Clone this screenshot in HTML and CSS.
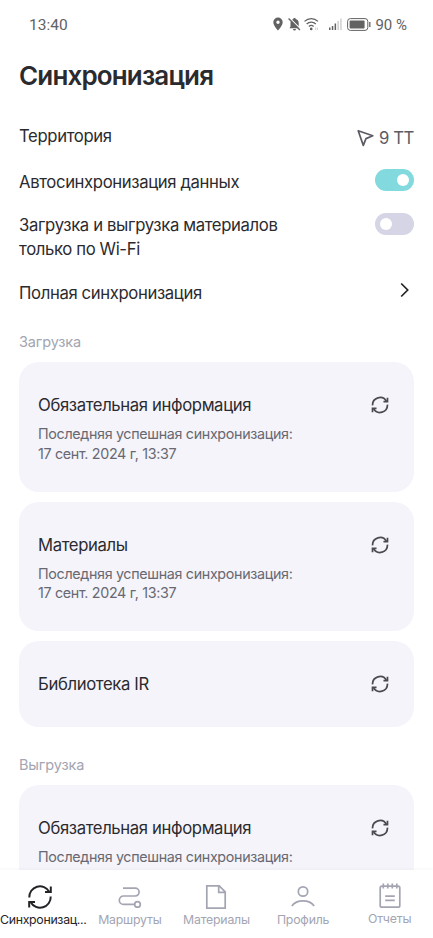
FILE: index.html
```html
<!DOCTYPE html>
<html lang="ru">
<head>
<meta charset="utf-8">
<meta name="viewport" content="width=device-width, initial-scale=1">
<title>Синхронизация</title>
<link rel="stylesheet" href="styles.css">
</head>
<body>
<svg class="defs" width="0" height="0" aria-hidden="true">
  <symbol id="sync" viewBox="0 0 26 26">
    <path d="M2.300 13.500A10.700 10.700 0 0 1 22.300 7.700M23.700 12.500A10.700 10.700 0 0 1 3.700 18.300"/>
    <path d="M23.800 2.500v5.500h-5.800M2.200 23.500v-5.500h5.800"/>
  </symbol>
</svg>
<div class="app">
  <header class="status">
    <span class="time">13:40</span>
    <div class="indicators">
      <svg class="pin" width="10" height="14" viewBox="0 0 10 14"><path fill="#626262" fill-rule="evenodd" d="M5 .5A4.7 4.7 0 0 0 .3 5.200C.3 8.600 5 13.500 5 13.500s4.700-4.900 4.700-8.300A4.700 4.700 0 0 0 5 .5zm0 3a1.700 1.700 0 1 1 0 3.400a1.700 1.700 0 0 1 0-3.400z"/></svg>
      <svg class="bell" width="13" height="14" viewBox="0 0 13 14"><path fill="#626262" d="M1.500 11.200 2.500 9.500V6C2.500 3.800 3.800 2.300 5.500 1.900V1h2v.9C9.400 2.300 10.700 3.800 10.700 6v3.500l1.200 1.700zM5 11.900h3a1.500 1.500 0 0 1-3 0z"/><path d="M1.500.8 12.800 12.100" stroke="#fff" stroke-width="1.200"/><path d="M.6 1.500 11.900 13" stroke="#626262" stroke-width="1.300"/></svg>
      <svg class="wifi" width="15" height="14" viewBox="0 0 15 14" fill="none" stroke="#626262" stroke-width="1.300"><path d="M.5 4.400a9.800 9.800 0 0 1 13.500 0M2.700 7a6.500 6.500 0 0 1 9.100 0M4.900 9.500a3.500 3.500 0 0 1 4.700 0"/><circle cx="7.200" cy="11.900" r=".7" fill="#626262"/><path d="M11.700 10.500v2.500M13.400 10.500v2.500" stroke="#c4c4c4" stroke-width=".8"/></svg>
      <svg class="signal" width="13" height="14" viewBox="0 0 13 14"><path fill="#626262" d="M0 10.500h1.500V13H0zM2.800 9h1.500v4H2.800zM5.600 6.500h1.500V13H5.600z"/><path fill="#d0d0d0" d="M8.400 4h1.500v9H8.400zM11.200 1.500h1.500V13h-1.500z"/></svg>
      <svg class="battery" width="24" height="13" viewBox="0 0 24 13"><rect x=".6" y=".6" width="20.200" height="11.800" rx="2.800" fill="none" stroke="#626262" stroke-width="1"/><rect x="2.600" y="2.600" width="15" height="7.800" rx="1" fill="#626262"/><path d="M22.800 4v5" stroke="#626262" stroke-width="1.300"/></svg>
      <span class="percent">90 %</span>
    </div>
  </header>
  <main class="content">
    <h1>Синхронизация</h1>
    <div class="row territory">
      <span>Территория</span>
      <span class="value"><svg width="17" height="18" viewBox="0 0 17 18" fill="none" stroke="#5b5b64" stroke-width="1.700" stroke-linejoin="round"><path d="M1.200 1.700 15.800 6.800 9 9.600 6.300 16.400z"/></svg>9 ТТ</span>
    </div>
    <div class="row auto"><span>Автосинхронизация данных</span><span class="toggle on"></span></div>
    <div class="row wifi-only"><span>Загрузка и выгрузка материалов<br>только по Wi-Fi</span><span class="toggle"></span></div>
    <div class="row full"><span>Полная синхронизация</span><svg class="chevron" width="10" height="16" viewBox="0 0 10 16" fill="none" stroke="#222" stroke-width="1.700"><path d="m1.200 1.500 6.500 6.500-6.500 6.500"/></svg></div>

    <h2>Загрузка</h2>
    <div class="cards">
      <section class="card">
        <div class="card-head"><h3>Обязательная информация</h3><svg class="sync"><use href="#sync"/></svg></div>
        <p>Последняя успешная синхронизация:<br>17 сент. 2024 г, 13:37</p>
      </section>
      <section class="card">
        <div class="card-head"><h3>Материалы</h3><svg class="sync"><use href="#sync"/></svg></div>
        <p>Последняя успешная синхронизация:<br>17 сент. 2024 г, 13:37</p>
      </section>
      <section class="card short">
        <div class="card-head"><h3>Библиотека IR</h3><svg class="sync"><use href="#sync"/></svg></div>
      </section>
    </div>
    <h2 class="upload">Выгрузка</h2>
    <div class="cards">
      <section class="card">
        <div class="card-head"><h3>Обязательная информация</h3><svg class="sync"><use href="#sync"/></svg></div>
        <p>Последняя успешная синхронизация:</p>
      </section>
    </div>
  </main>
  <nav class="tabs">
    <a class="tab active"><svg class="tab-sync" viewBox="0 0 26 26"><use href="#sync"/></svg><span>Синхронизац...</span></a>
    <a class="tab"><svg viewBox="0 0 26 26"><path d="M6 4.200h12.200a3.900 3.900 0 0 1 0 7.800H6.500a4.200 4.200 0 0 0 0 8.400h11"/><circle cx="20.500" cy="20.400" r="2.800"/></svg><span>Маршруты</span></a>
    <a class="tab"><svg viewBox="0 0 26 26"><path d="M3.800 1.800h12.400l6 6v16.400H3.800zM15.700 1.800v6.500h6.500"/></svg><span>Материалы</span></a>
    <a class="tab"><svg viewBox="0 0 26 26"><circle cx="13" cy="7.500" r="4.700"/><path d="M1.800 22c5-6.800 17.400-6.800 22.400 0"/></svg><span>Профиль</span></a>
    <a class="tab reports"><svg viewBox="0 0 26 26"><rect x="3.200" y="3.200" width="19.600" height="21" rx="1.800"/><path d="M6.300.5v5M10.800.5v5M15.300.5v5M19.800.5v5M8.200 13.200h9.600M8.200 17.300h9.600"/></svg><span>Отчеты</span></a>
  </nav>
</div>
</body>
</html>
```
FILE: styles.css
```css
* { box-sizing: border-box; }

body {
  margin: 0;
  background: #fff;
  color: #2b2b2f;
  font-family: Inter, "Liberation Sans", sans-serif;
}

.defs { display: block; }

.app {
  display: flex;
  flex-direction: column;
  height: 938px;
  overflow: hidden;
}

.status {
  flex: none;
  display: flex;
  justify-content: space-between;
  align-items: center;
  height: 48px;
  padding: 0 26px 0 29px;
  color: #626262;
  font-family: Roboto, sans-serif;
  font-size: 15.5px;
}

.time { padding-top: 1px; }
.indicators { display: flex; align-items: center; }
.bell { margin-left: 5px; }
.wifi { margin-left: 3px; }
.signal { margin-left: 10px; }
.battery { margin-left: 5px; }
.percent { margin-left: 4px; padding-top: 1px; font-size: 15px; }

.content {
  flex: 1;
  min-height: 0;
  overflow: hidden;
  padding: 12px 19px 0;
}

h1, h2, h3, p { margin: 0; }

h1 {
  height: 32px;
  font-size: 26px;
  line-height: 32px;
  font-weight: 600;
  letter-spacing: -0.85px;
}

.row {
  display: flex;
  justify-content: space-between;
  align-items: flex-start;
  font-size: 16.7px;
  line-height: 24px;
  letter-spacing: -0.37px;
}

.territory { height: 24px; margin-top: 32px; }
.auto { margin-top: 22px; }
.wifi-only { margin-top: 19px; }
.full { margin-top: 20px; }

.value {
  display: flex;
  align-items: center;
  gap: 5px;
  margin-top: 2px;
  color: #5b5b64;
}

.toggle {
  width: 39px;
  height: 22px;
  padding: 5px;
  border-radius: 11px;
  background: #d5d5e5;
}

.toggle::before {
  content: "";
  display: block;
  width: 12px;
  height: 12px;
  border-radius: 50%;
  background: #fff;
}

.toggle.on { background: #83dade; }
.toggle.on::before { margin-left: auto; }
.auto .toggle { margin-top: -1px; }

.chevron { margin: 1px 4px 0 0; }

h2 {
  margin: 28px 0 10px;
  color: #a3a5b2;
  font-size: 14.5px;
  line-height: 20px;
  font-weight: 400;
  letter-spacing: -0.15px;
}

.full + h2 { margin-top: 27px; }

.cards { display: grid; gap: 10px; }

.card {
  height: 129.5px;
  padding: 31px 25px 0 19px;
  border-radius: 20px;
  background: #f4f4fa;
}

.card.short { height: 86px; }

.card-head {
  display: flex;
  justify-content: space-between;
  align-items: center;
  height: 24px;
}

h3 {
  font-size: 16.7px;
  font-weight: 400;
  letter-spacing: -0.37px;
}

.card p {
  margin-top: 7px;
  color: #686872;
  font-size: 14.3px;
  line-height: 19.5px;
  letter-spacing: -0.33px;
}

.sync {
  width: 18px;
  height: 18px;
  fill: none;
  stroke: #4a4a50;
  stroke-width: 2.5;
}

.tabs {
  flex: none;
  display: grid;
  grid-template-columns: repeat(5, minmax(0, 1fr));
  height: 68px;
  background: #fff;
  box-shadow: 0 -1px 3px rgba(60, 60, 90, 0.04);
}

.tab {
  display: flex;
  flex-direction: column;
  align-items: center;
  padding-top: 14px;
  color: #a3a5b2;
  font-size: 12.3px;
  line-height: 16px;
  letter-spacing: -0.2px;
  white-space: nowrap;
}

.tab svg {
  flex: none;
  width: 26px;
  height: 26px;
  margin-bottom: 2px;
  fill: none;
  stroke: currentColor;
  stroke-width: 1.7;
}

.tab .tab-sync { margin-right: 6px; stroke-width: 2; }
.tab.active { color: #242428; letter-spacing: -0.3px; }
.tab.reports { padding-top: 13px; }
```
